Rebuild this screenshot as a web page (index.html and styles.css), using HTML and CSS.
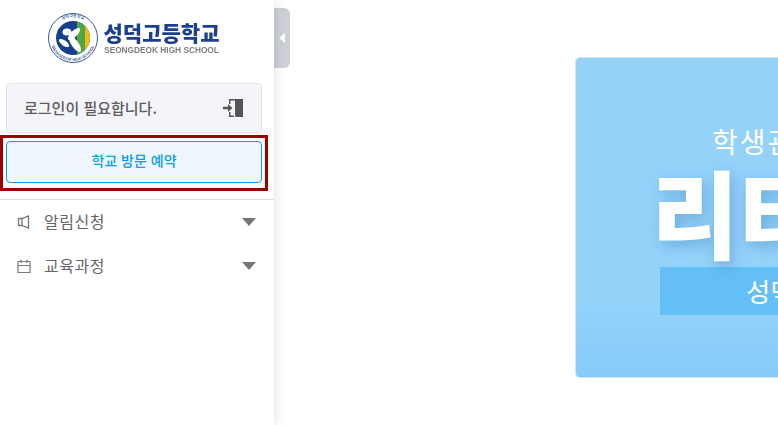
FILE: index.html
```html
<!DOCTYPE html>
<html lang="ko">
<head>
    <meta charset="UTF-8">
    <meta name="viewport" content="width=device-width, initial-scale=1.0">
    <title>성덕고등학교</title>
    <link rel="stylesheet" href="styles.css">
</head>
<body>
    <div class="page">
        <aside class="sidebar">
            <div class="logo">
                <svg class="emblem" width="52" height="52" viewBox="0 0 52 52">
                    <defs>
                        <path id="ring-top" d="M5 26a21 21 0 0 1 42 0"/>
                        <path id="ring-bottom" d="M3 26a23 23 0 0 0 46 0"/>
                    </defs>
                    <circle cx="26" cy="26" r="24.500" fill="#fff" stroke="#3a5a9c" stroke-width="1"/>
                    <text class="ring-text" text-anchor="middle"><textPath href="#ring-top" startOffset="50%">성덕고등학교</textPath></text>
                    <text class="ring-text" text-anchor="middle"><textPath href="#ring-bottom" startOffset="50%">SEONGDEOK HIGH SCHOOL</textPath></text>
                    <circle cx="26" cy="26" r="17" fill="#16408f"/>
                    <path d="M30 9.500a17 17 0 0 1 0 33z" fill="#4ea83f"/>
                    <path d="M38 14a17 17 0 0 1 0 24z" fill="#f2b81c"/>
                    <ellipse cx="20" cy="20" rx="4.500" ry="3.500" fill="#fff"/>
                    <ellipse cx="27" cy="22" rx="8" ry="3.200" transform="rotate(-45 27 22)" fill="#fff"/>
                    <ellipse cx="28" cy="32" rx="9.500" ry="3.500" transform="rotate(55 28 32)" fill="#fff"/>
                    <ellipse cx="17" cy="31" rx="6" ry="2.600" transform="rotate(35 17 31)" fill="#fff"/>
                </svg>
                <div class="logo-text">
                    <div class="logo-ko">성덕고등학교</div>
                    <div class="logo-en">SEONGDEOK HIGH SCHOOL</div>
                </div>
            </div>

            <div class="login-box">
                <span>로그인이 필요합니다.</span>
                <svg width="20" height="20" viewBox="0 0 20 20">
                    <path d="M6 1h5v1.500H7.500V6H6zM6 14h1.500v3.500H11V19H6z" fill="#555"/>
                    <path d="M10 1h10v18h-7l-1-1V3z" fill="#555"/>
                    <path d="M0 8.800h5V6l4.500 4L5 14v-2.800H0z" fill="#555"/>
                </svg>
            </div>

            <div class="visit-wrap">
                <button class="visit-btn">학교 방문 예약</button>
            </div>

            <ul class="menu">
                <li>
                    <svg width="14" height="14" viewBox="0 0 14 14" fill="none" stroke="#777" stroke-width="1.300">
                        <path d="M1.500 3.500h3.500l6.500-2.500v12l-6.500-2.500H1.500z"/>
                        <path d="M5 3.500v7"/>
                    </svg>
                    <span>알림신청</span>
                    <i class="caret"></i>
                </li>
                <li>
                    <svg width="14" height="14" viewBox="0 0 14 14" fill="none" stroke="#777" stroke-width="1.200">
                        <path d="M1 2.500h12v11H1z"/>
                        <path d="M1 6.500h12M4 .5v3.500M10 .5v3.500"/>
                    </svg>
                    <span>교육과정</span>
                    <i class="caret"></i>
                </li>
            </ul>
        </aside>

        <div class="handle"><i></i></div>

        <main class="content">
            <div class="banner">
                <div class="banner-sub">학생관리 프로그램</div>
                <div class="banner-title">리터러시</div>
                <div class="banner-strip">성덕고등학교</div>
            </div>
        </main>
    </div>
</body>
</html>
```

FILE: styles.css
```css
* {
    box-sizing: border-box;
}

html,
body {
    margin: 0;
    padding: 0;
    height: 100%;
    overflow: hidden;
    background-color: #fff;
    font-family: "Noto Sans CJK KR", "Noto Sans", sans-serif;
}

.page {
    display: flex;
    width: 778px;
    height: 425px;
    overflow: hidden;
}

.sidebar {
    flex: 0 0 274px;
    background-color: #fff;
    box-shadow: 2px 0 10px rgba(0,0,0,0.1);
    position: relative;
}

.logo {
    display: flex;
    justify-content: center;
    align-items: center;
    gap: 5px;
    height: 83px;
    padding: 0 8px 8px 0;
    filter: blur(0.3px);
}

.ring-text {
    font-family: "Liberation Sans", "Noto Sans CJK KR", sans-serif;
    font-size: 4px;
    font-weight: 700;
    fill: #4a6399;
}

.logo-text {
    text-align: center;
}

.logo-ko {
    font-size: 21px;
    line-height: 25px;
    font-weight: 900;
    color: #1c3f8f;
    white-space: nowrap;
}

.logo-en {
    font-family: "Liberation Sans", sans-serif;
    font-size: 8.300px;
    line-height: 11px;
    font-weight: 700;
    color: #7d7f83;
    white-space: nowrap;
}

.login-box {
    display: flex;
    justify-content: space-between;
    align-items: center;
    width: 256px;
    height: 50px;
    margin-left: 6px;
    padding: 0 18px 0 17px;
    background-color: #f4f5f8;
    border: 1px solid #e2e3e6;
    border-radius: 4px;
    color: #5c5c5c;
    font-size: 15px;
    font-weight: 500;
}

.login-box span {
    padding-bottom: 2px;
}

.visit-wrap {
    width: 268px;
    height: 56px;
    margin-top: 2px;
    padding: 3px;
    border: 3px solid #a00000;
}

.visit-btn {
    display: block;
    width: 256px;
    height: 42px;
    padding: 0 0 4px;
    background-color: #eff6fd;
    border: 1px solid #0a9fe0;
    border-radius: 4px;
    color: #0a9fe0;
    font-family: inherit;
    font-size: 14px;
    font-weight: 500;
}

.menu {
    list-style: none;
    margin: 8px 0 0;
    padding: 0;
    border-top: 1px solid #ddd;
}

.menu li {
    display: flex;
    align-items: center;
    height: 44px;
    padding: 0 17px;
    color: #666;
    font-size: 16px;
}

.menu li span {
    flex: 1;
    margin-left: 13px;
    padding-bottom: 2px;
    letter-spacing: 0.5px;
}

.caret {
    width: 0;
    height: 0;
    border-left: 7.500px solid transparent;
    border-right: 7.500px solid transparent;
    border-top: 8px solid #777;
    margin-right: 1px;
    margin-left: -1px;
}

.handle {
    flex: 0 0 16px;
    display: flex;
    justify-content: center;
    align-items: center;
    height: 60px;
    margin-top: 8px;
    background-color: #ccd0d6;
    border-radius: 0 6px 6px 0;
}

.handle i {
    width: 0;
    height: 0;
    border-top: 5px solid transparent;
    border-bottom: 5px solid transparent;
    border-right: 6px solid #fff;
}

.content {
    flex: 0 0 488px;
    padding: 57px 0 0 285px;
}

.banner {
    width: 494px;
    height: 321px;
    background: linear-gradient(#94d2f9 0%, #94d2f9 75%, #86cbf9 100%);
    border: 1px solid #d8e4ec;
    border-radius: 5px;
    color: #fff;
    text-align: center;
    overflow: hidden;
}

.banner-sub {
    margin-top: 65px;
    padding-left: 12px;
    font-size: 28px;
    line-height: 36px;
    letter-spacing: 2px;
    white-space: nowrap;
}

.banner-title {
    margin-top: -3px;
    padding-left: 8px;
    font-size: 95px;
    line-height: 110px;
    font-weight: 900;
    white-space: nowrap;
    text-shadow: 3px 5px 14px rgba(60,130,190,0.45);
}

.banner-strip {
    width: 324px;
    height: 48px;
    margin: 1px auto 0;
    padding-right: 8px;
    background-color: #65bff7;
    font-size: 26px;
    line-height: 47px;
}
```
